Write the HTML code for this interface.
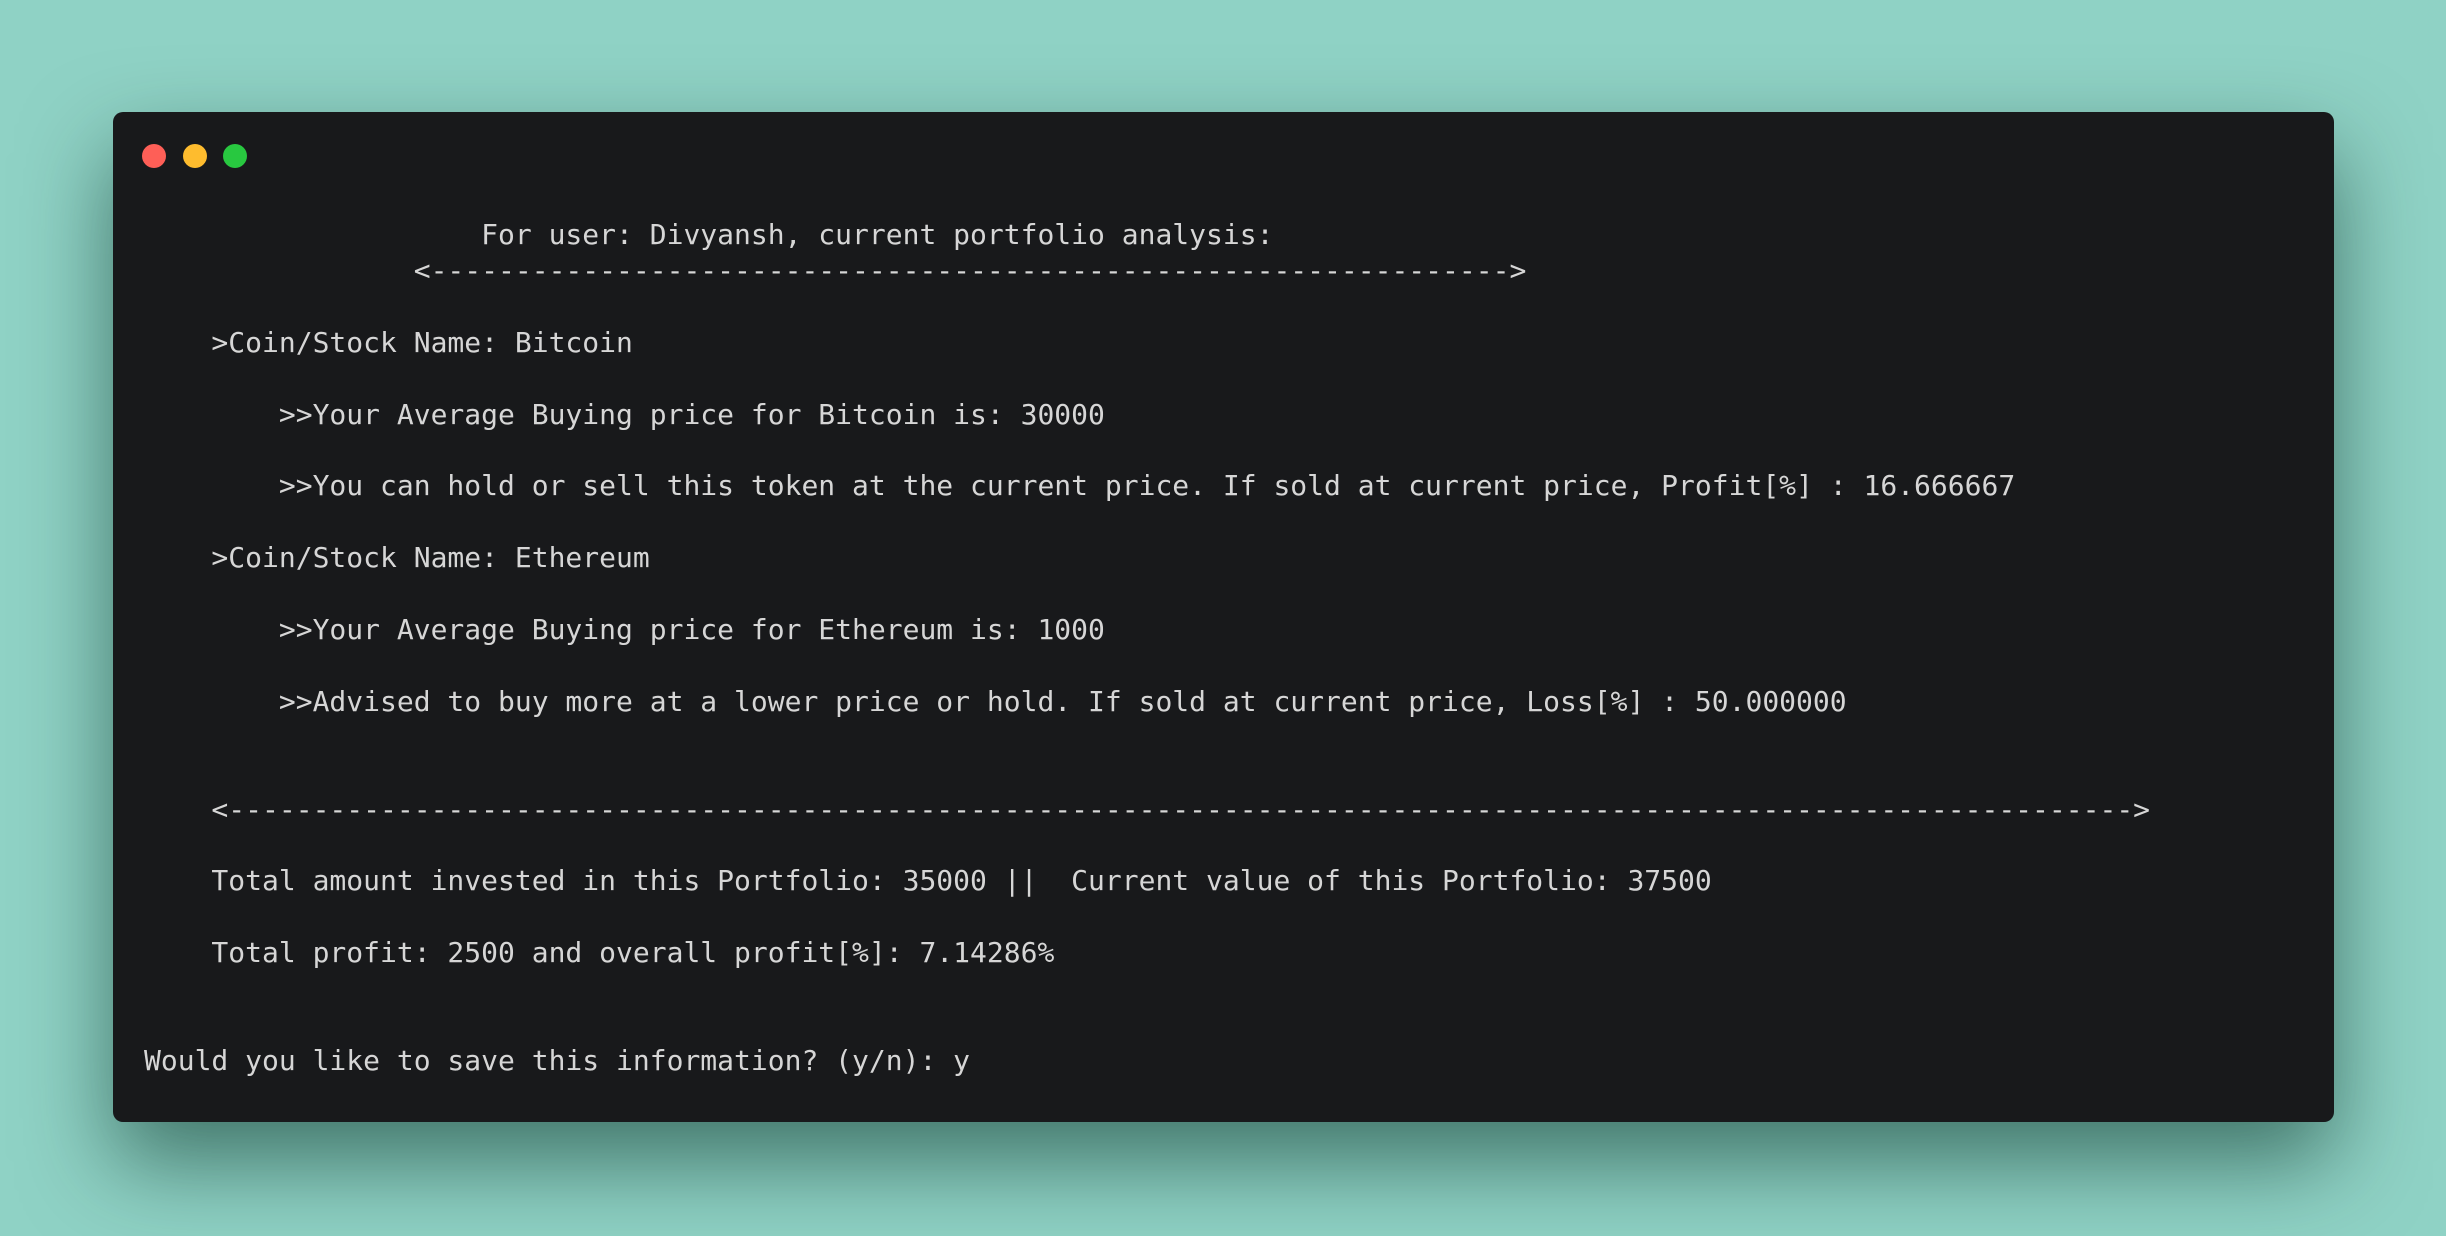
<!DOCTYPE html>
<html><head><meta charset="utf-8"><style>
html,body{margin:0;padding:0;width:2446px;height:1236px;overflow:hidden;background:#8fd2c5;}
.win{position:absolute;left:113px;top:112px;width:2221px;height:1010px;background:#18191b;border-radius:10px;box-shadow:0 40px 90px rgba(0,40,30,0.55);}
.dot{position:absolute;top:144px;width:24px;height:24px;border-radius:50%;}
pre{position:absolute;left:144px;top:217px;margin:0;font-family:"DejaVu Sans Mono","Liberation Mono",monospace;font-size:28px;line-height:35.9px;color:#d6d6d6;}
</style></head><body>
<div class="win"></div>
<div class="dot" style="left:142px;background:#fe5f57"></div>
<div class="dot" style="left:183px;background:#febc2e"></div>
<div class="dot" style="left:223px;background:#28c840"></div>
<pre>                    For user: Divyansh, current portfolio analysis:
                &lt;----------------------------------------------------------------&gt;

    &gt;Coin/Stock Name: Bitcoin

        &gt;&gt;Your Average Buying price for Bitcoin is: 30000

        &gt;&gt;You can hold or sell this token at the current price. If sold at current price, Profit[%] : 16.666667

    &gt;Coin/Stock Name: Ethereum

        &gt;&gt;Your Average Buying price for Ethereum is: 1000

        &gt;&gt;Advised to buy more at a lower price or hold. If sold at current price, Loss[%] : 50.000000


    &lt;-----------------------------------------------------------------------------------------------------------------&gt;

    Total amount invested in this Portfolio: 35000 ||  Current value of this Portfolio: 37500

    Total profit: 2500 and overall profit[%]: 7.14286%


Would you like to save this information? (y/n): y</pre>
</body></html>
